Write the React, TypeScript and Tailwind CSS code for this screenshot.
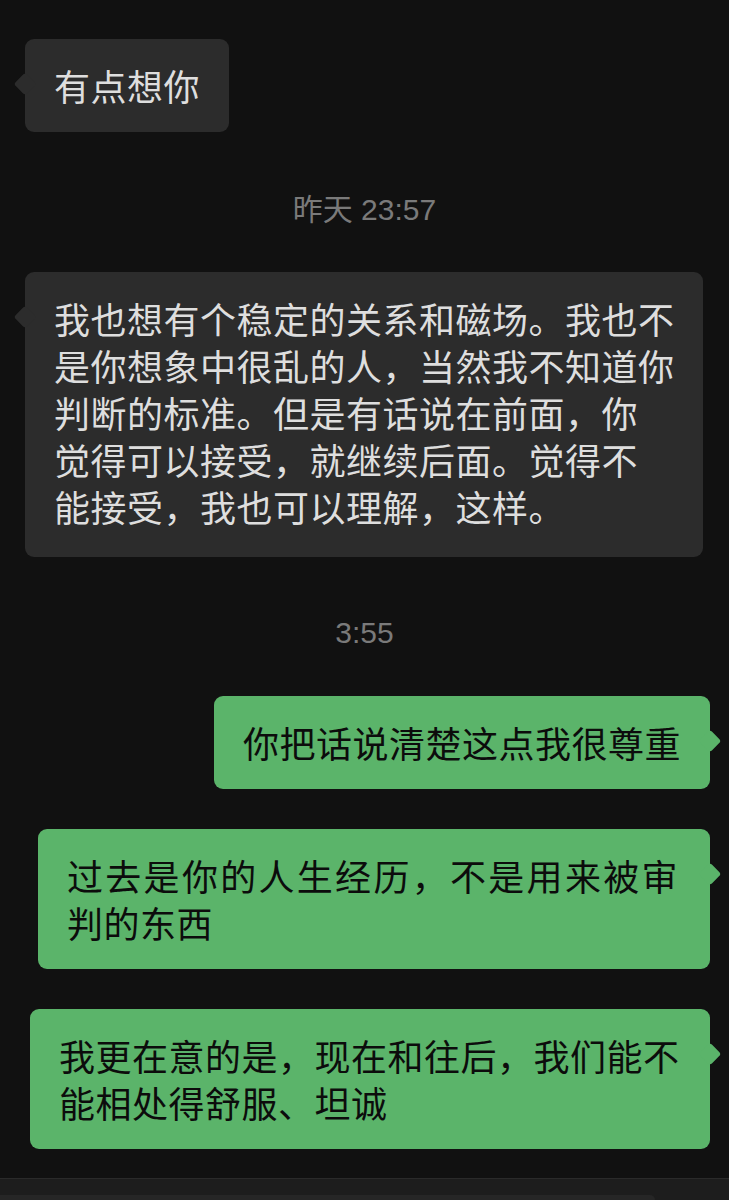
const font = { fontFamily: '"Noto Sans CJK SC", "Noto Sans", sans-serif' };

function Tail({ side, color }: { side: "left" | "right"; color: string }) {
  return (
    <span
      className={`absolute top-[37px] h-[16px] w-[16px] rotate-45 rounded-[3px] ${color} ${
        side === "left" ? "left-[-8px]" : "right-[-8px]"
      }`}
    />
  );
}

function Received({ children, className = "" }: { children: React.ReactNode; className?: string }) {
  return (
    <div className="flex justify-start pl-[25px]">
      <div
        className={`relative whitespace-nowrap rounded-[9px] bg-[#2c2c2c] px-[29px] py-[23px] text-[36px] leading-[47px] tracking-[0.5px] text-[#dedede] ${className}`}
      >
        <Tail side="left" color="bg-[#2c2c2c]" />
        <span className="relative">{children}</span>
      </div>
    </div>
  );
}

function Sent({ children, className = "" }: { children: React.ReactNode; className?: string }) {
  return (
    <div className="flex justify-end pr-[19px]">
      <div
        className={`relative whitespace-nowrap rounded-[9px] bg-[#5bb46a] px-[29px] py-[23px] text-[36px] leading-[47px] tracking-[0.5px] text-[#0c0c0c] ${className}`}
      >
        <Tail side="right" color="bg-[#5bb46a]" />
        <span className="relative">{children}</span>
      </div>
    </div>
  );
}

function Time({ text }: { text: string }) {
  return (
    <div
      className="text-center text-[30px] leading-[40px] text-[#7a7a7a]"
      style={{ fontFamily: '"Liberation Sans", "Noto Sans CJK SC", sans-serif' }}
    >
      {text}
    </div>
  );
}

export default function App() {
  return (
    <div className="flex h-[1200px] w-[729px] flex-col overflow-hidden bg-[#111111]" style={font}>
      <div className="flex flex-1 flex-col pt-[39px]">
        <Received>有点想你</Received>

        <div className="mt-[58px] mb-[42px]">
          <Time text="昨天 23:57" />
        </div>

        <Received className="w-[678px] pb-[27px]">
          我也想有个稳定的关系和磁场。我也不
          <br />
          是你想象中很乱的人，当然我不知道你
          <br />
          判断的标准。但是有话说在前面，你
          <br />
          觉得可以接受，就继续后面。觉得不
          <br />
          能接受，我也可以理解，这样。
        </Received>

        <div className="mt-[56px] mb-[43px]">
          <Time text="3:55" />
        </div>

        <div className="flex flex-col gap-[40px]">
          <Sent>你把话说清楚这点我很尊重</Sent>
          <Sent className="w-[672px]">
            <span className="tracking-[2.3px]">过去是你的人生经历，不是用来被审</span>
            <br />
            判的东西
          </Sent>
          <Sent className="w-[680px]">
            我更在意的是，现在和往后，我们能不
            <br />
            能相处得舒服、坦诚
          </Sent>
        </div>
      </div>

      <div className="h-[22px] border-t border-[#2a2a2a] bg-[#1d1d1d] pt-[16px]">
        <div className="h-full w-[655px] rounded-tr-[8px] bg-[#262626]" />
      </div>
    </div>
  );
}
